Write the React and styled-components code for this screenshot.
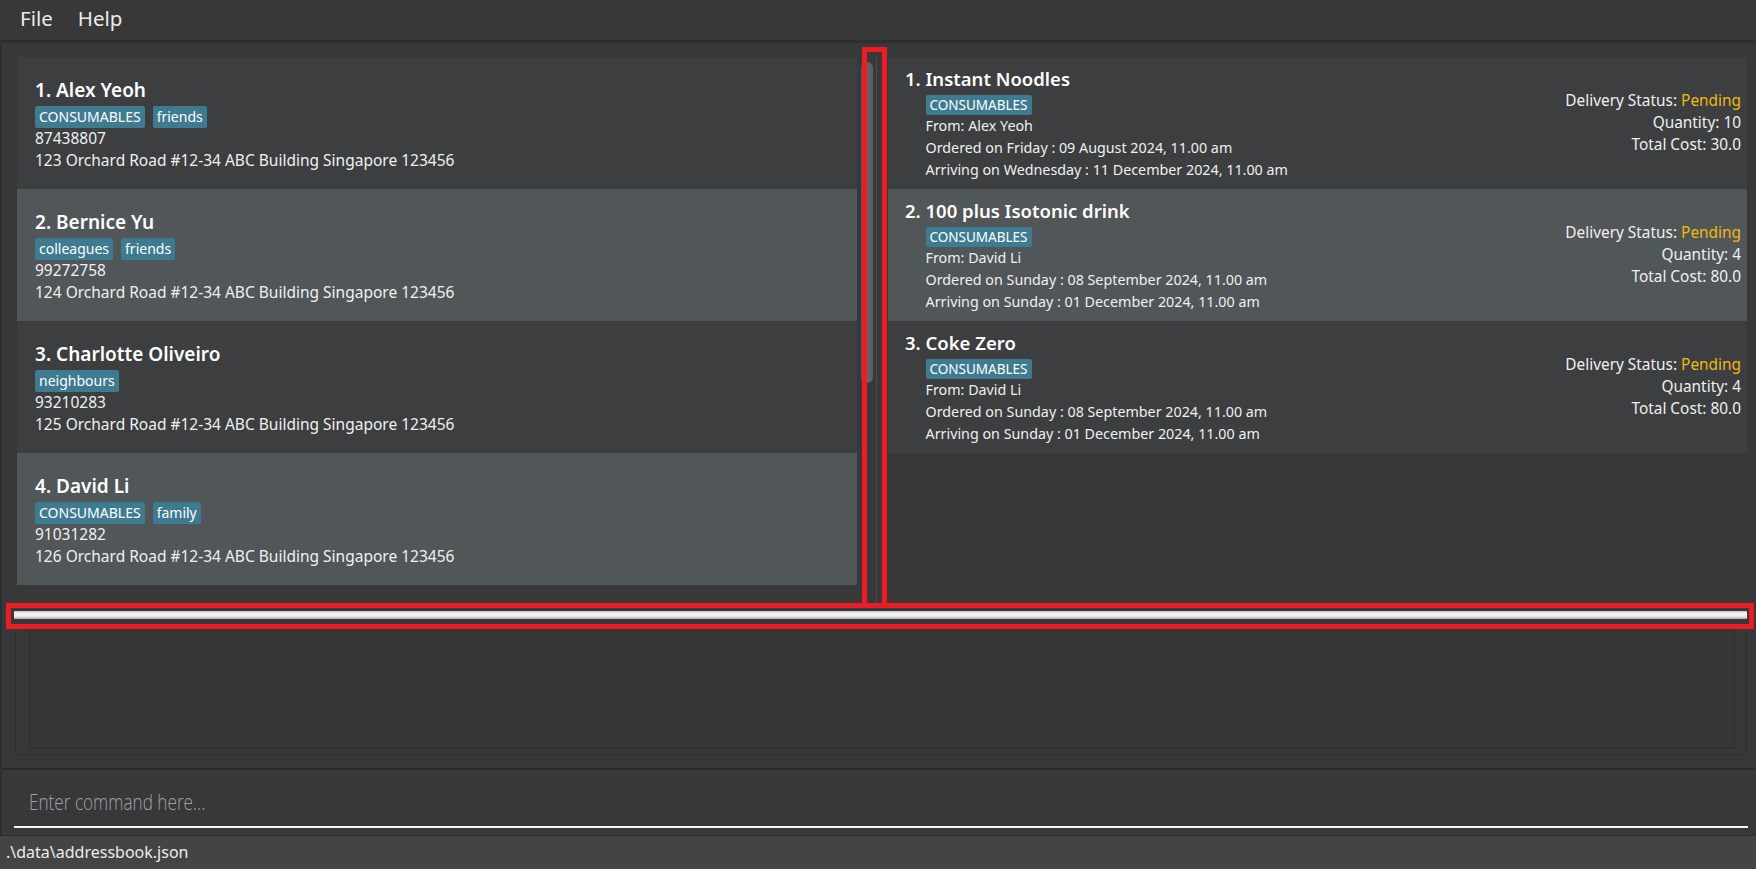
import React from "react";
import styled, { createGlobalStyle } from "styled-components";

const GlobalStyle = createGlobalStyle`
  html, body {
    margin: 0;
    padding: 0;
    background: #383838;
  }
  body {
    font-family: "Noto Sans", "Open Sans", sans-serif;
  }
`;

const Window = styled.div`
  width: 1756px;
  height: 869px;
  display: flex;
  flex-direction: column;
  overflow: hidden;
  background: #383838;
`;

const MenuBar = styled.div`
  height: 40px;
  display: flex;
  align-items: flex-start;
  gap: 25px;
  padding-left: 20px;
  background: #383838;
  border-bottom: 3px solid #2e2e2e;
`;

const MenuItem = styled.span`
  font-size: 20.5px;
  line-height: 37px;
  color: #ececec;
`;

const Main = styled.div`
  flex: 1;
  display: flex;
  flex-direction: column;
  border-left: 2px solid #2e2e2e;
`;

const TopRow = styled.div`
  position: relative;
  height: 560px;
  display: flex;
`;

const PersonPane = styled.div`
  width: 840px;
  padding: 14px 0 0 15px;
`;

const ScrollTrack = styled.div`
  width: 16px;
  padding: 19px 0 0 4px;
  box-sizing: border-box;
`;

const ScrollThumb = styled.div`
  width: 12px;
  height: 321px;
  border-radius: 6px;
  background: linear-gradient(to right, #565656, #676767 45%, #5c5c5c);
`;

const SplitGap = styled.div`
  width: 15px;
  padding: 14px 0 0 3px;
  box-sizing: border-box;
`;

const SplitLine = styled.div`
  width: 1px;
  height: 100%;
  background: #4b4b4b;
`;

const OrderPane = styled.div`
  width: 859px;
  padding-top: 14px;
`;

const Highlight = styled.div`
  position: absolute;
  left: 860px;
  top: 4px;
  width: 25px;
  height: 561px;
  box-sizing: border-box;
  border: 5px solid #ed1c24;
  z-index: 2;
`;

const PersonCard = styled.div`
  height: 132px;
  box-sizing: border-box;
  padding: 20px 0 0 18px;
  background: ${(p) => (p.$odd ? "#515658" : "#3c3e3f")};
`;

const PersonName = styled.div`
  font-size: 19px;
  font-weight: 600;
  line-height: 26px;
  color: #ffffff;
`;

const TagRow = styled.div`
  display: flex;
  gap: ${(p) => p.$gap || 9}px;
  margin: ${(p) => p.$margin};
`;

const Tag = styled.span`
  font-size: ${(p) => p.$size}px;
  line-height: ${(p) => p.$height}px;
  padding: 0 4px;
  border-radius: 2px;
  background: #3e7b91;
  color: #ffffff;
`;

const PersonLine = styled.div`
  font-size: 15.5px;
  line-height: 22px;
  color: #f0f0f0;
`;

const OrderCard = styled.div`
  height: 132px;
  box-sizing: border-box;
  display: flex;
  padding: 0 6px 0 17px;
  background: ${(p) => (p.$odd ? "#515658" : "#3c3e3f")};
`;

const OrderMain = styled.div`
  display: flex;
  align-items: flex-start;
  margin-top: 9px;
`;

const OrderId = styled.span`
  font-size: 18.5px;
  font-weight: 600;
  line-height: 26px;
  color: #ffffff;
  white-space: pre;
`;

const OrderBody = styled.div`
  display: flex;
  flex-direction: column;
  align-items: flex-start;
`;

const OrderName = styled(OrderId)``;

const OrderLine = styled.div`
  font-size: ${(p) => p.$size || 14.3}px;
  line-height: 22px;
  color: #f0f0f0;
`;

const OrderSide = styled.div`
  margin-left: auto;
  align-self: center;
  text-align: right;
`;

const Pending = styled.span`
  color: #f2b90f;
`;

const HDivider = styled.div`
  height: 26px;
  margin: 0 2px 0 4px;
  box-sizing: border-box;
  border: 5px solid #ed1c24;
  padding: 3px 2px 0 3px;
  position: relative;
  z-index: 3;
`;

const DividerBar = styled.div`
  height: 8px;
  background: linear-gradient(to bottom, #c9c9c9, #f7f7f7 35%, #e9e9e9 70%, #a9a9a9);
`;

const ResultArea = styled.div`
  height: 139px;
  padding: 0 9px 0 13px;
`;

const ResultOuter = styled.div`
  height: 126px;
  box-sizing: border-box;
  border: 1px solid #2f2f2f;
  border-top: none;
  padding: 0 11px 5px 13px;
`;

const ResultInner = styled.div`
  height: 100%;
  box-sizing: border-box;
  border: 1px solid #2c2c2c;
  border-top: none;
  background: #363636;
`;

const CommandArea = styled.div`
  height: 67px;
  box-sizing: border-box;
  border-top: 2px solid #2b2b2b;
  padding: 0 8px 0 12px;
`;

const CommandField = styled.div`
  height: 58px;
  box-sizing: border-box;
  padding: 16px 0 0 15px;
  border-bottom: 2px solid #f4f4f4;
`;

// the reference uses a narrow light face; squeeze Open Sans Light to fit
const Placeholder = styled.span`
  display: inline-block;
  font-family: "Open Sans", "Noto Sans", sans-serif;
  font-size: 22px;
  font-weight: 300;
  line-height: 30px;
  color: #9aa2aa;
  transform: scaleX(0.78);
  transform-origin: left center;
`;

const StatusBar = styled.div`
  height: 34px;
  box-sizing: border-box;
  border-top: 1px solid #2b2b2b;
  background: #444444;
  padding-left: 6px;
  font-size: 16px;
  line-height: 33px;
  color: #ececec;
`;

const persons = [
  { name: "Alex Yeoh", tags: ["CONSUMABLES", "friends"], phone: "87438807", address: "123 Orchard Road #12-34 ABC Building Singapore 123456" },
  { name: "Bernice Yu", tags: ["colleagues", "friends"], phone: "99272758", address: "124 Orchard Road #12-34 ABC Building Singapore 123456" },
  { name: "Charlotte Oliveiro", tags: ["neighbours"], phone: "93210283", address: "125 Orchard Road #12-34 ABC Building Singapore 123456" },
  { name: "David Li", tags: ["CONSUMABLES", "family"], phone: "91031282", address: "126 Orchard Road #12-34 ABC Building Singapore 123456" },
];

const orders = [
  { name: "Instant Noodles", from: "Alex Yeoh", ordered: "Friday : 09 August 2024, 11.00 am", arriving: "Wednesday : 11 December 2024, 11.00 am", qty: 10, cost: "30.0" },
  { name: "100 plus Isotonic drink", from: "David Li", ordered: "Sunday : 08 September 2024, 11.00 am", arriving: "Sunday : 01 December 2024, 11.00 am", qty: 4, cost: "80.0" },
  { name: "Coke Zero", from: "David Li", ordered: "Sunday : 08 September 2024, 11.00 am", arriving: "Sunday : 01 December 2024, 11.00 am", qty: 4, cost: "80.0" },
];

const App = () => {
  return (
    <Window>
      <GlobalStyle />
      <MenuBar>
        <MenuItem>File</MenuItem>
        <MenuItem>Help</MenuItem>
      </MenuBar>
      <Main>
        <TopRow>
          <PersonPane>
            {persons.map((p, i) => (
              <PersonCard key={p.name} $odd={i % 2 === 1}>
                <PersonName>{i + 1}. {p.name}</PersonName>
                <TagRow $margin="3px 0 -1px" $gap={8}>
                  {p.tags.map((t) => (
                    <Tag key={t} $size={14} $height={22}>{t}</Tag>
                  ))}
                </TagRow>
                <PersonLine>{p.phone}</PersonLine>
                <PersonLine>{p.address}</PersonLine>
              </PersonCard>
            ))}
          </PersonPane>
          <ScrollTrack>
            <ScrollThumb />
          </ScrollTrack>
          <SplitGap>
            <SplitLine />
          </SplitGap>
          <OrderPane>
            {orders.map((o, i) => (
              <OrderCard key={o.name} $odd={i % 2 === 1}>
                <OrderMain>
                  <OrderId>{i + 1}. </OrderId>
                  <OrderBody>
                    <OrderName>{o.name}</OrderName>
                    <TagRow $margin="3px 0 0">
                      <Tag $size={13.5} $height={20}>CONSUMABLES</Tag>
                    </TagRow>
                    <OrderLine>From: {o.from}</OrderLine>
                    <OrderLine>Ordered on {o.ordered}</OrderLine>
                    <OrderLine>Arriving on {o.arriving}</OrderLine>
                  </OrderBody>
                </OrderMain>
                <OrderSide>
                  <OrderLine $size={15.4}>Delivery Status: <Pending>Pending</Pending></OrderLine>
                  <OrderLine $size={15.4}>Quantity: {o.qty}</OrderLine>
                  <OrderLine $size={15.4}>Total Cost: {o.cost}</OrderLine>
                </OrderSide>
              </OrderCard>
            ))}
          </OrderPane>
          <Highlight />
        </TopRow>
        <HDivider>
          <DividerBar />
        </HDivider>
        <ResultArea>
          <ResultOuter>
            <ResultInner />
          </ResultOuter>
        </ResultArea>
        <CommandArea>
          <CommandField>
            <Placeholder>Enter command here...</Placeholder>
          </CommandField>
        </CommandArea>
      </Main>
      <StatusBar>.\data\addressbook.json</StatusBar>
    </Window>
  );
};

export default App;
